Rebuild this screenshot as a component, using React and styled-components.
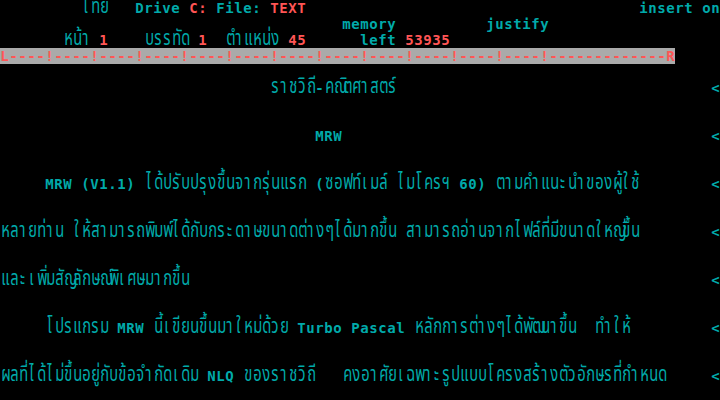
import React from "react";
import styled, { createGlobalStyle } from "styled-components";

const CYAN = "#00aaaa";
const RED = "#ff5555";
const GREY = "#aaaaaa";
const COLS = 80;
const ROWS = 25;

const GlobalStyle = createGlobalStyle`
  html, body {
    margin: 0;
    padding: 0;
    background: #000;
  }
`;

const Screen = styled.div`
  width: 720px;
  height: 400px;
  background: #000;
  overflow: hidden;
  display: flex;
  flex-direction: column;
`;

const Row = styled.div`
  display: flex;
  flex: none;
  height: 16px;
`;

const Cell = styled.span`
  flex: none;
  width: 9px;
  height: 16px;
  line-height: 16px;
  white-space: pre;
  overflow: visible;
  text-align: center;
  color: ${(p) => p.$color};
  background: ${(p) => p.$bg || "transparent"};
  font-family: "DejaVu Sans Mono", monospace;
  font-weight: 700;
  font-size: 14px;
`;

// thai letters are thin and tall in the dos font, squeeze them into the cell
const ThaiCell = styled(Cell)`
  font-family: "Noto Sans Thai", "DejaVu Sans", sans-serif;
  font-weight: 400;
  font-size: 21px;
  line-height: 14px;
  transform: scaleX(0.7);
`;

// thai marks that sit above/below the previous letter and take no cell
const isMark = (ch) => {
  const c = ch.charCodeAt(0);
  return c === 0x0e31 || (c >= 0x0e34 && c <= 0x0e3a) || (c >= 0x0e47 && c <= 0x0e4e);
};
const isThai = (s) => /[\u0e00-\u0e7f]/.test(s);

const clusters = (str) => {
  const out = [];
  for (const ch of str) {
    if (isMark(ch) && out.length) out[out.length - 1] += ch;
    else out.push(ch);
  }
  return out;
};

const C = CYAN;
const R = RED;
const RULER = "L" + "----!".repeat(12) + "-".repeat(13) + "R";

// [col, text, colour, background]
const lines = {
  0: [
    [9, "ไทย", C],
    [15, "Drive", C],
    [21, "C:", R],
    [24, "File:", C],
    [30, "TEXT", R],
    [71, "insert on", C],
  ],
  1: [
    [38, "memory", C],
    [54, "justify", C],
  ],
  2: [
    [7, "หน้า", C],
    [11, "1", R],
    [16, "บรรทัด", C],
    [22, "1", R],
    [25, "ตำแหน่ง", C],
    [32, "45", R],
    [40, "left", C],
    [45, "53935", R],
  ],
  3: [[0, RULER, R, GREY]],
  5: [
    [30, "ราชวิถี-คณิตศาสตร์", C],
    [79, "<", C],
  ],
  8: [
    [35, "MRW", C],
    [79, "<", C],
  ],
  11: [
    [5, "MRW (V1.1) ได้ปรับปรุงขึ้นจากรุ่นแรก (ซอฟท์เมล์ ไมโครฯ 60) ตามคำแนะนำของผู้ใช้", C],
    [79, "<", C],
  ],
  14: [
    [0, "หลายท่าน ให้สามารถพิมพ์ได้กับกระดาษขนาดต่างๆได้มากขึ้น สามารถอ่านจากไฟล์ที่มีขนาดใหญ่ขึ้น", C],
    [79, "<", C],
  ],
  17: [
    [0, "และเพิ่มสัญลักษณ์พิเศษมากขึ้น", C],
    [79, "<", C],
  ],
  20: [
    [5, "โปรแกรม MRW นี้เขียนขึ้นมาใหม่ด้วย Turbo Pascal หลักการต่างๆได้พัฒนาขึ้น  ทำให้", C],
    [79, "<", C],
  ],
  23: [
    [0, "ผลที่ได้ไม่ขึ้นอยู่กับข้อจำกัดเดิม NLQ ของราชวิถี   คงอาศัยเฉพาะรูปแบบโครงสร้างตัวอักษรที่กำหนด", C],
    [79, "<", C],
  ],
};

const buildRow = (segments = []) => {
  const cells = Array.from({ length: COLS }, () => ({ ch: " ", color: C }));
  segments.forEach(([col, text, color, bg]) => {
    clusters(text).forEach((ch, i) => {
      if (col + i < COLS) cells[col + i] = { ch, color, bg };
    });
  });
  return cells;
};

const App = () => {
  return (
    <>
      <GlobalStyle />
      <Screen>
        {Array.from({ length: ROWS }, (_, r) => (
          <Row key={r}>
            {buildRow(lines[r]).map((cell, i) => {
              const Box = isThai(cell.ch) ? ThaiCell : Cell;
              return (
                <Box key={i} $color={cell.color} $bg={cell.bg}>
                  {cell.ch}
                </Box>
              );
            })}
          </Row>
        ))}
      </Screen>
    </>
  );
};

export default App;
